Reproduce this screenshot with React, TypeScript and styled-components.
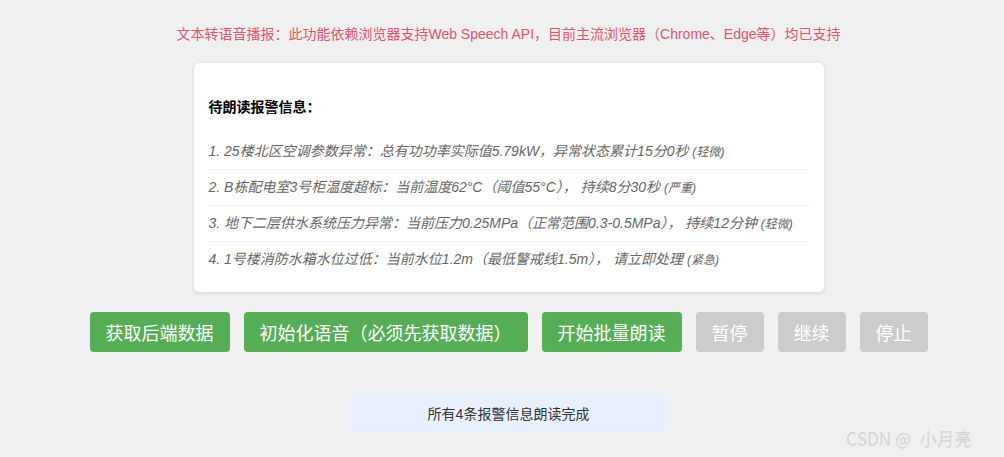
import React from "react";
import styled, { createGlobalStyle } from "styled-components";

const Global = createGlobalStyle`
  html, body { margin: 0; padding: 0; background: #f0f0f0; }
  body { font-family: "Liberation Sans", "Noto Sans CJK SC", Arial, sans-serif; }
`;

const Page = styled.div`
  position: relative;
  width: 1004px;
  height: 457px;
  box-sizing: border-box;
  padding: 24px 0 0 13px;
  display: flex;
  flex-direction: column;
  align-items: center;
  overflow: hidden;
`;

const Notice = styled.p`
  margin: 0;
  font-size: 14px;
  line-height: 20px;
  color: #e4536d;
`;

const Card = styled.section`
  margin-top: 19px;
  width: 600px;
  padding: 15px;
  background: #fff;
  border-radius: 5px;
  box-shadow: 0 1px 4px rgba(0, 0, 0, 0.12);
`;

const Title = styled.h3`
  margin: 19px 0 17px;
  font-size: 14px;
  line-height: 20px;
  font-weight: bold;
  color: #000;
`;

const List = styled.ul`
  list-style: none;
  margin: 0;
  padding: 0;
`;

const Item = styled.li<{ $last?: boolean }>`
  padding: 8px 0;
  height: 19px;
  line-height: 19px;
  font-size: 14px;
  font-style: italic;
  color: #666;
  white-space: nowrap;
  border-bottom: ${(p) => (p.$last ? "none" : "1px solid #eee")};
`;

const Level = styled.span`
  font-size: 12px;
  line-height: 1;
`;

const Buttons = styled.div`
  margin-top: 20px;
  display: flex;
  gap: 14px;
`;

const Button = styled.button<{ $disabled?: boolean }>`
  height: 40px;
  padding: 0 16px;
  border: none;
  border-radius: 4px;
  font-family: "Liberation Sans", "Noto Sans CJK SC", sans-serif;
  font-size: 18px;
  color: #fff;
  background: ${(p) => (p.$disabled ? "#cccccc" : "#55ae55")};
  cursor: ${(p) => (p.$disabled ? "not-allowed" : "pointer")};
`;

const Status = styled.div`
  margin-top: 41px;
  width: 320px;
  height: 40px;
  display: flex;
  align-items: center;
  justify-content: center;
  background: #e8f0fe;
  border-radius: 4px;
  font-size: 14px;
  color: #333;
`;

const Watermark = styled.div`
  position: absolute;
  right: 32px;
  bottom: 8px;
  font-family: "Noto Sans CJK SC", sans-serif;
  font-size: 17px;
  font-weight: 300;
  line-height: 22px;
  color: #d2d2d2;
  text-shadow: 0 1px 1px rgba(0, 0, 0, 0.1);
  letter-spacing: 0.4px;
  white-space: pre;
`;

const alerts = [
  { text: "1. 25楼北区空调参数异常：总有功功率实际值5.79kW，异常状态累计15分0秒", level: "轻微" },
  { text: "2. B栋配电室3号柜温度超标：当前温度62°C（阈值55°C）， 持续8分30秒", level: "严重" },
  { text: "3. 地下二层供水系统压力异常：当前压力0.25MPa（正常范围0.3-0.5MPa）， 持续12分钟", level: "轻微" },
  { text: "4. 1号楼消防水箱水位过低：当前水位1.2m（最低警戒线1.5m）， 请立即处理", level: "紧急" },
];

export default function App() {
  return (
    <Page>
      <Global />
      <Notice>
        文本转语音播报：此功能依赖浏览器支持Web Speech API，目前主流浏览器（Chrome、Edge等）均已支持
      </Notice>
      <Card>
        <Title>待朗读报警信息：</Title>
        <List>
          {alerts.map((a, i) => (
            <Item key={i} $last={i === alerts.length - 1}>
              {a.text} <Level>({a.level})</Level>
            </Item>
          ))}
        </List>
      </Card>
      <Buttons>
        <Button>获取后端数据</Button>
        <Button>初始化语音（必须先获取数据）</Button>
        <Button>开始批量朗读</Button>
        <Button $disabled>暂停</Button>
        <Button $disabled>继续</Button>
        <Button $disabled>停止</Button>
      </Buttons>
      <Status>所有4条报警信息朗读完成</Status>
      <Watermark>{"CSDN @  小月亮"}</Watermark>
    </Page>
  );
}
